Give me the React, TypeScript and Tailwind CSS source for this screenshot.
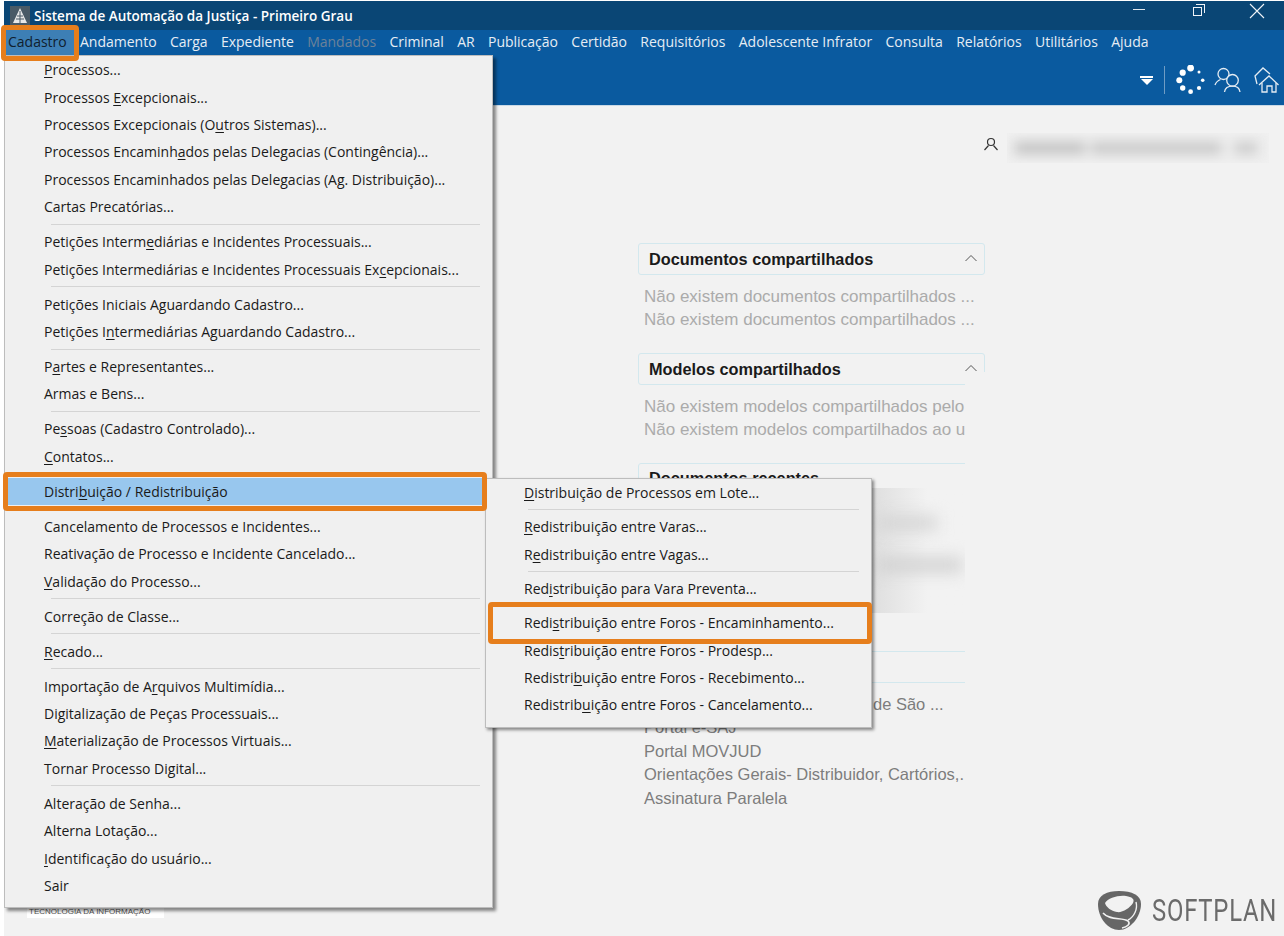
const menuFont = "[font-family:'Open_Sans','Noto_Sans',sans-serif]"

type Entry = { label: string; u?: number; sub?: boolean } | "sep"

const mainMenu: Entry[] = [
  { label: "Processos...", u: 0 },
  { label: "Processos Excepcionais...", u: 10 },
  { label: "Processos Excepcionais (Outros Sistemas)...", u: 25 },
  { label: "Processos Encaminhados pelas Delegacias (Contingência)...", u: 18 },
  { label: "Processos Encaminhados pelas Delegacias (Ag. Distribuição)..." },
  { label: "Cartas Precatórias..." },
  "sep",
  { label: "Petições Intermediárias e Incidentes Processuais...", u: 15 },
  { label: "Petições Intermediárias e Incidentes Processuais Excepcionais...", u: 51 },
  "sep",
  { label: "Petições Iniciais Aguardando Cadastro..." },
  { label: "Petições Intermediárias Aguardando Cadastro...", u: 10 },
  "sep",
  { label: "Partes e Representantes...", u: 1 },
  { label: "Armas e Bens..." },
  "sep",
  { label: "Pessoas (Cadastro Controlado)...", u: 2 },
  { label: "Contatos...", u: 0 },
  "sep",
  { label: "Distribuição / Redistribuição", u: 6, sub: true },
  "sep",
  { label: "Cancelamento de Processos e Incidentes..." },
  { label: "Reativação de Processo e Incidente Cancelado..." },
  { label: "Validação do Processo...", u: 0 },
  "sep",
  { label: "Correção de Classe..." },
  "sep",
  { label: "Recado...", u: 0 },
  "sep",
  { label: "Importação de Arquivos Multimídia...", u: 15 },
  { label: "Digitalização de Peças Processuais..." },
  { label: "Materialização de Processos Virtuais...", u: 0 },
  { label: "Tornar Processo Digital..." },
  "sep",
  { label: "Alteração de Senha..." },
  { label: "Alterna Lotação..." },
  { label: "Identificação do usuário...", u: 0 },
  { label: "Sair" },
]

const subMenu: Entry[] = [
  { label: "Distribuição de Processos em Lote...", u: 0 },
  "sep",
  { label: "Redistribuição entre Varas...", u: 0 },
  { label: "Redistribuição entre Vagas...", u: 1 },
  "sep",
  { label: "Redistribuição para Vara Preventa...", u: 3 },
  "sep",
  { label: "Redistribuição entre Foros - Encaminhamento...", u: 4 },
  { label: "Redistribuição entre Foros - Prodesp...", u: 5 },
  { label: "Redistribuição entre Foros - Recebimento...", u: 8 },
  { label: "Redistribuição entre Foros - Cancelamento...", u: 9 },
]

const topMenu = ["Andamento", "Carga", "Expediente", "Mandados", "Criminal", "AR", "Publicação", "Certidão", "Requisitórios", "Adolescente Infrator", "Consulta", "Relatórios", "Utilitários", "Ajuda"]

function Label({ label, u }: { label: string; u?: number }) {
  if (u === undefined) return <span>{label}</span>
  return (
    <span>
      {label.slice(0, u)}
      <span className="underline underline-offset-2">{label[u]}</span>
      {label.slice(u + 1)}
    </span>
  )
}

function MenuRows({ items, left, sepClass }: { items: Entry[]; left: string; sepClass: string }) {
  return (
    <>
      {items.map((item, i) =>
        item === "sep" ? (
          <div key={i} className={`flex items-center ${sepClass}`}>
            <div className="h-px flex-1 bg-[#d4d4d4]" />
          </div>
        ) : (
          <div
            key={i}
            className={`relative flex h-[27.42px] items-center whitespace-nowrap ${left} ${item.sub ? "bg-[#98c7ee]" : ""}`}
          >
            <Label label={item.label} u={item.u} />
            {item.sub && (
              <div className="absolute right-[5px] top-[9px] h-0 w-0 border-y-[4.5px] border-l-[5px] border-y-transparent border-l-[#111]" />
            )}
          </div>
        ),
      )}
    </>
  )
}

function Panel({ title, lines, clipped }: { title: string; lines: string[]; clipped?: boolean }) {
  return (
    <div className="relative w-[347px]">
      <div className="flex h-[32px] w-[347px] items-center justify-between rounded-[3px] border border-[#d3e8ee] pl-[10px] pr-[6px] pt-[1px]">
        <span className="text-[16.3px] font-bold text-[#1a1a1a]">{title}</span>
        <svg className="mb-[3px]" width="14" height="8" viewBox="0 0 14 8" fill="none" stroke="#555" strokeWidth="1">
          <path d="M1.5 7 L7 1.5 L12.5 7" />
        </svg>
      </div>
      {clipped && <div className="absolute left-[327px] top-[19px] h-[14px] w-[21px] bg-[#f2f2f2]" />}
      <div className={`mt-[10px] overflow-hidden whitespace-nowrap pl-[6px] text-[17px] leading-[23.4px] text-[#ababab] ${clipped ? "w-[327px]" : "w-[347px]"}`}>
        {lines.map((l, i) => (
          <div key={i}>{l}</div>
        ))}
      </div>
    </div>
  )
}

function UsersIcon() {
  return (
    <svg width="28" height="28" viewBox="0 0 28 28" fill="none" stroke="#e4ecf3" strokeWidth="1.3">
      <circle cx="9.5" cy="8" r="5.5" />
      <path d="M1 19 C2 16 4 14.5 6.5 13.5" />
      <circle cx="18.5" cy="14.3" r="5.8" fill="#0a5a9f" />
      <path d="M10.5 26 C11 22.5 14 20.2 18.5 20.2 C23 20.2 25.5 22.5 26 26" />
    </svg>
  )
}

function HomeIcon() {
  return (
    <svg width="28" height="28" viewBox="0 0 28 28" fill="none" stroke="#e4ecf3" strokeWidth="1.3">
      <path d="M4 18 L2 10 L10 2 L17 8" />
      <path d="M6 19 L16 10 L25.5 19" />
      <path d="M9 17 V26 H14 V20 H19 V26 H23 V17" />
    </svg>
  )
}

function Spinner() {
  const dots = [
    [15.6, 3, 3.4], [7.7, 7.7, 3.1], [4.3, 15.3, 3], [7.7, 23, 2.7], [15.6, 26.7, 2.4], [24, 23, 2.1], [27.7, 15.3, 1.8], [24, 7, 1.5],
  ]
  return (
    <svg width="30" height="30" viewBox="0 0 30 30" fill="#fff">
      {dots.map(([x, y, r], i) => (
        <circle key={i} cx={x} cy={y} r={r} />
      ))}
    </svg>
  )
}

function SoftplanMark() {
  return (
    <svg width="45" height="41" viewBox="0 0 45 41">
      <path d="M22 1 C35 1 44 5 44 14 C44 27 33 40 22 40 C11 40 1 28 1 14 C1 5 10 1 22 1 Z" fill="#666" />
      <path d="M8 13 C11 8 21 5 29 6 C35 7 38 9 36 13 C33 18 25 23 20 22 C14 21 9 17 8 13 Z" fill="#f2f2f2" />
      <path d="M6 23 C13 31 25 27 31 31 C34 34 30 37 25 38" fill="none" stroke="#f2f2f2" strokeWidth="1.6" />
      <path d="M39 12 C41 19 37 27 31 30" fill="none" stroke="#f2f2f2" strokeWidth="1.4" />
    </svg>
  )
}

export default function App() {
  return (
    <div className="relative h-[936px] w-[1284px] overflow-hidden bg-white pl-[4px] pt-[1px] [font-family:'Liberation_Sans',Arial,sans-serif]">
      <div className="flex h-[935px] flex-col bg-[#f2f2f2]">
        {/* title bar */}
        <div className={`flex h-[29px] shrink-0 items-center bg-[#0a4675] text-white ${menuFont}`}>
          <div className="ml-[6px] flex h-[19px] w-[20px] items-center justify-center bg-[#4a5a66]">
            <svg width="16" height="17" viewBox="0 0 16 17">
              <path d="M8 1 L15 16 H1 Z" fill="#e8e8e8" />
              <path d="M5 9 H11 M4 12 H12 M8 4 V16" stroke="#4a5a66" strokeWidth="1" />
            </svg>
          </div>
          <span className="ml-[4px] pt-[2px] text-[13.5px] font-semibold">Sistema de Automação da Justiça - Primeiro Grau</span>
          <div className="ml-auto flex items-center">
            <div className="mb-[12px] mr-[48px] h-[1.5px] w-[12px] bg-[#dfe7ee]" />
            <div className="relative mb-[12px] mr-[44px] h-[12px] w-[12px]">
              <div className="absolute bottom-0 left-0 h-[9px] w-[9px] border border-[#f0f4f8]" />
              <div className="absolute right-0 top-0 h-[9px] w-[9px] border-r border-t border-[#f0f4f8]" />
            </div>
            <svg className="mb-[10px] mr-[19px]" width="16" height="16" viewBox="0 0 16 16" stroke="#f0f4f8" strokeWidth="1.1">
              <path d="M1 1 L15 15 M15 1 L1 15" />
            </svg>
          </div>
        </div>

        {/* menu bar */}
        <div className={`flex h-[25px] shrink-0 items-center bg-[#0a5a9f] text-[14px] text-[#e6edf4] ${menuFont}`}>
          <div className="flex h-[25px] w-[70px] items-center bg-[#3d7fb5] pb-[2px] pl-[4px] text-[#10202e]">Cadastro</div>
          <div className="ml-[6px] flex gap-[13.3px] pb-[2px]">
            {topMenu.map((m) => (
              <span key={m} className={m === "Mandados" ? "text-[#6d8299]" : ""}>{m}</span>
            ))}
          </div>
        </div>

        {/* toolbar */}
        <div className="flex h-[51px] shrink-0 items-center justify-end border-b border-[#c9d9e6] bg-[#0a5a9f] pr-[3px]">
          <div className="mr-[11px] flex flex-col items-center gap-[1px]">
            <div className="h-[2px] w-[13px] bg-white" />
            <div className="h-0 w-0 border-x-[6px] border-t-[6px] border-x-transparent border-t-white" />
          </div>
          <div className="mr-[10px] h-[28px] w-px bg-[#6f9cc4]" />
          <Spinner />
          <div className="ml-[9px]"><UsersIcon /></div>
          <div className="ml-[11px]"><HomeIcon /></div>
        </div>

        {/* content */}
        <div className="flex flex-1 flex-col pl-[634px]">
          <div className="ml-[345px] mt-[27px] flex items-start">
            <svg className="mt-[4px]" width="16" height="16" viewBox="0 0 16 16" fill="none" stroke="#333" strokeWidth="1.2">
              <circle cx="8" cy="5" r="3.5" />
              <path d="M5.5 8.5 L1.5 13 M10.5 8.5 L14.5 13" />
            </svg>
            <div className="ml-[8px] h-[30px] w-[262px] overflow-hidden">
              <div className="flex h-[30px] items-center gap-[6px] bg-[#ececec] blur-[6px]">
                <div className="ml-[8px] h-[12px] w-[70px] bg-[#c4c4c4]" />
                <div className="h-[12px] w-[130px] bg-[#cacaca]" />
                <div className="ml-[8px] h-[12px] w-[22px] bg-[#cdcdcd]" />
              </div>
            </div>
          </div>

          <div className="mt-[80px]">
            <Panel title="Documentos compartilhados" lines={["Não existem documentos compartilhados ...", "Não existem documentos compartilhados ..."]} />
          </div>
          <div className="mt-[21px]">
            <Panel clipped title="Modelos compartilhados" lines={["Não existem modelos compartilhados pelo", "Não existem modelos compartilhados ao u"]} />
          </div>
          <div className="relative mt-[21px] h-[188px] w-[327px] overflow-hidden">
            <div className="flex h-[32px] w-[347px] items-center rounded-[3px] border border-[#d3e8ee] pl-[10px]">
              <span className="text-[16.3px] font-bold text-[#1a1a1a]">Documentos recentes</span>
            </div>
            <div className="absolute left-[233px] top-[25px] h-[125px] w-[94px] overflow-hidden bg-gradient-to-r from-[#dedede] to-[#f2f2f2] to-60%">
              <div className="ml-[6px] mt-[28px] h-[14px] w-[60px] bg-[#d4d4d4] blur-[8px]" />
              <div className="ml-[6px] mt-[28px] h-[14px] w-[85px] bg-[#d0d0d0] blur-[8px]" />
            </div>
          </div>
          <div className="h-px w-[327px] bg-[#d3e8ee]" />
          <div className="mt-[30px] h-px w-[327px] bg-[#d3e8ee]" />
          <div className="mt-[10px] w-[327px] whitespace-nowrap pl-[6px] text-[16.5px] leading-[23.6px] text-[#7d7d7d]">
            <div className="pl-[229px]">de São ...</div>
            <div>Portal e-SAJ</div>
            <div>Portal MOVJUD</div>
            <div>Orientações Gerais- Distribuidor, Cartórios,.</div>
            <div>Assinatura Paralela</div>
          </div>
        </div>
      </div>

      {/* logos at the bottom */}
      <div className="absolute left-[27px] top-[900px] h-[18px] w-[137px] bg-white pl-[2px] pt-[7px] text-[8px] leading-[10px] text-[#555]">TECNOLOGIA DA INFORMAÇÃO</div>
      <div className="absolute left-[1097px] top-[890px] flex items-center">
        <SoftplanMark />
        <span className="ml-[10px] w-[125px] origin-left scale-x-[0.77] text-[31px] font-normal leading-none tracking-[1px] text-[#6b6b6b] [font-family:Roboto,sans-serif]">SOFTPLAN</span>
      </div>

      {/* main dropdown */}
      <div className={`absolute left-[4px] top-[55px] h-[853px] w-[489px] border border-[#bdbdbd] bg-[#f0f0f0] text-[14px] text-[#1a1a1a] shadow-[3px_3px_3px_rgba(0,0,0,0.45)] ${menuFont}`}>
        <MenuRows items={mainMenu} left="pl-[39px]" sepClass="h-[7.6px] pl-[46px] pr-[12px]" />
      </div>

      {/* submenu */}
      <div className={`absolute left-[485px] top-[478px] h-[250px] w-[387px] border border-[#bdbdbd] bg-[#f0f0f0] text-[14px] text-[#1a1a1a] shadow-[2px_2px_3px_rgba(0,0,0,0.45)] ${menuFont}`}>
        <MenuRows items={subMenu} left="pl-[38px]" sepClass="h-[6.8px] pl-[42px] pr-[12px]" />
      </div>

      {/* orange callouts */}
      <div className="absolute left-[1px] top-[25px] h-[36px] w-[78px] rounded-[4px] border-[5px] border-[#e67e1c]" />
      <div className="absolute left-[3px] top-[472px] h-[39px] w-[484px] rounded-[4px] border-[5px] border-[#e67e1c]" />
      <div className="absolute left-[488px] top-[602px] h-[42px] w-[384px] rounded-[4px] border-[5px] border-[#e67e1c]" />
    </div>
  )
}
